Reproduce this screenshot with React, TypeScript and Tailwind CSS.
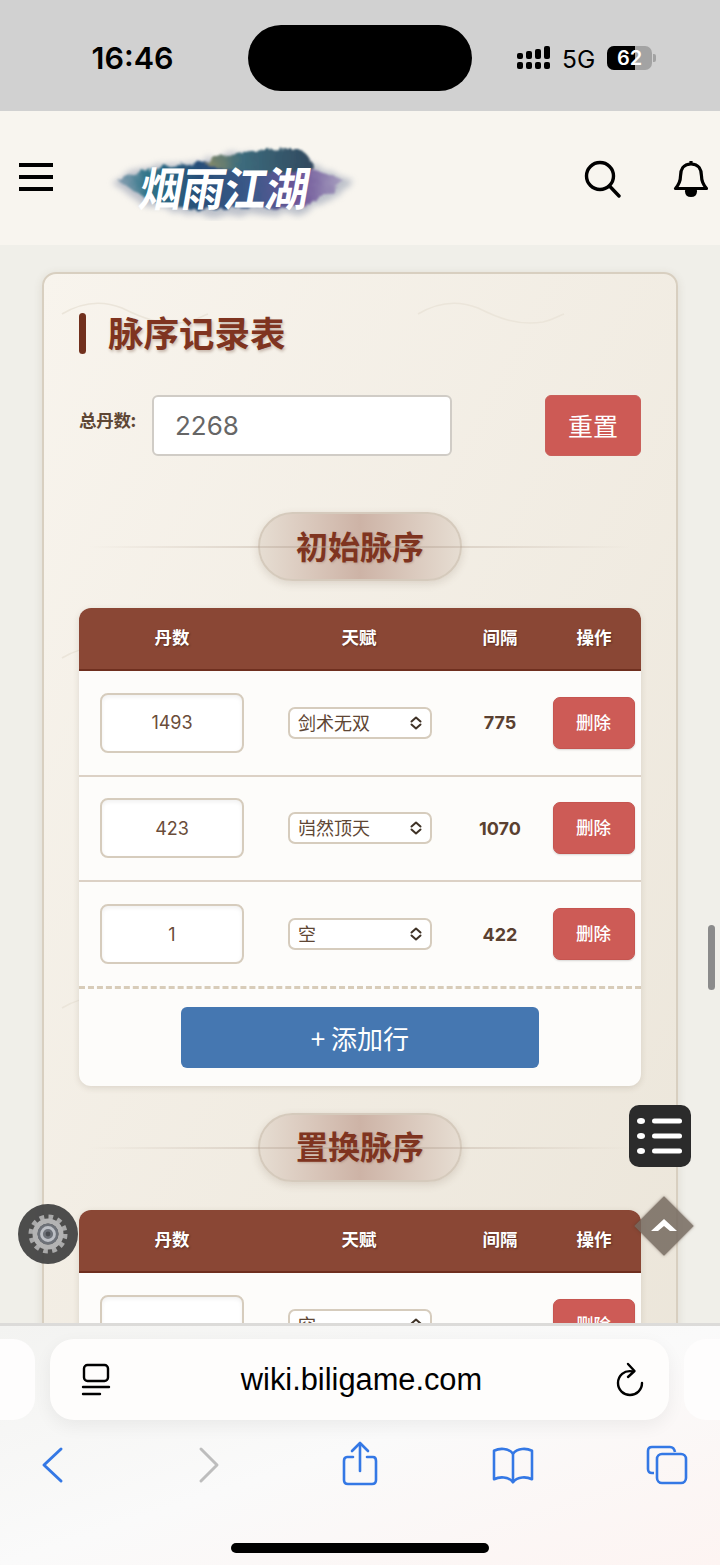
import React from "react";

const cjk = { fontFamily: '"Noto Sans CJK SC", "Noto Sans", sans-serif' };

function Signal() {
  return (
    <svg width="36" height="24" viewBox="0 0 36 24" className="block">
      <g fill="#000">
        <rect x="1" y="7" width="6" height="6" rx="2" />
        <rect x="10" y="5" width="6" height="8" rx="2" />
        <rect x="19" y="3" width="6" height="10" rx="2" />
        <rect x="28" y="0" width="6" height="13" rx="2" />
        <rect x="1" y="16" width="6" height="7" rx="2" />
        <rect x="10" y="16" width="6" height="7" rx="2" />
        <rect x="19" y="16" width="6" height="7" rx="2" />
        <rect x="28" y="16" width="6" height="7" rx="2" />
      </g>
    </svg>
  );
}

function Battery() {
  return (
    <div className="flex items-center gap-[1px]">
      <div className="relative flex h-[24px] w-[45px] items-center justify-center overflow-hidden rounded-[7px] bg-[#a3a3a3]">
        <div className="absolute inset-y-0 left-0 w-[28px] bg-black" />
        <span className="relative text-[20px] font-semibold leading-none text-white" style={{ fontFamily: "Inter, sans-serif" }}>
          62
        </span>
      </div>
      <div className="h-[8px] w-[3px] rounded-r-[2px] bg-[#a3a3a3]" />
    </div>
  );
}

function StatusBar() {
  return (
    <div className="flex h-[111px] shrink-0 bg-[#d1d1d1]">
      <div className="flex w-[248px] items-center justify-center pl-[17px] pt-[5px]">
        <span className="text-[30.5px] font-semibold leading-none text-black" style={{ fontFamily: "Inter, sans-serif" }}>
          16:46
        </span>
      </div>
      <div className="mt-[25px] h-[66px] w-[224px] rounded-[33px] bg-black" />
      <div className="flex items-center pl-[44px] pt-[5px]">
        <Signal />
        <span className="ml-[10px] mr-[12px] mt-[3px] text-[24.5px] leading-none text-black" style={{ fontFamily: "Inter, sans-serif" }}>
          5G
        </span>
        <Battery />
      </div>
    </div>
  );
}

function Logo() {
  return (
    <div className="relative h-[84px] w-[256px]">
      <svg width="256" height="84" viewBox="0 0 256 84" className="absolute inset-0">
        <defs>
          <linearGradient id="ink" x1="0" x2="1" y1="0" y2="0">
            <stop offset="0" stopColor="#8ea2b4" />
            <stop offset="0.13" stopColor="#2f7488" />
            <stop offset="0.36" stopColor="#274e78" />
            <stop offset="0.6" stopColor="#3d5a8a" />
            <stop offset="0.8" stopColor="#6d5498" />
            <stop offset="1" stopColor="#a9a2c0" />
          </linearGradient>
          <linearGradient id="top" x1="0" x2="1" y1="0" y2="0">
            <stop offset="0" stopColor="#8c8d66" />
            <stop offset="0.35" stopColor="#3c6b7c" />
            <stop offset="1" stopColor="#31495f" />
          </linearGradient>
          <filter id="haze" x="-15%" y="-30%" width="130%" height="160%">
            <feTurbulence type="fractalNoise" baseFrequency="0.06" numOctaves="3" seed="9" />
            <feDisplacementMap in="SourceGraphic" scale="12" />
            <feGaussianBlur stdDeviation="3" />
          </filter>
          <filter id="rough" x="-10%" y="-20%" width="120%" height="140%">
            <feTurbulence type="fractalNoise" baseFrequency="0.12" numOctaves="3" seed="4" />
            <feDisplacementMap in="SourceGraphic" scale="8" />
            <feGaussianBlur stdDeviation="1.2" />
          </filter>
        </defs>
        <path
          filter="url(#haze)"
          d="M6 44 C30 28 60 28 92 22 C130 14 170 14 196 24 C220 32 240 38 250 45 C236 56 224 68 204 74 C170 80 130 76 100 78 C75 78 50 74 30 62 C20 54 14 50 6 44 Z"
          fill="#8e98ad"
          opacity="0.55"
        />
        <g filter="url(#rough)">
          <path
            d="M14 44 C34 32 60 30 92 26 C120 20 160 20 186 26 C206 32 226 36 240 44 C228 52 218 62 200 68 C170 74 136 68 108 72 C84 74 62 70 44 62 C32 54 24 50 14 44 Z"
            fill="url(#ink)"
          />
          <path d="M100 26 C118 16 150 12 196 12 C204 18 212 26 206 34 C168 36 124 36 100 26 Z" fill="url(#top)" />
        </g>
      </svg>
      <div
        className="absolute left-[31px] top-[18px] flex h-[60px] w-[180px] items-center justify-center whitespace-nowrap text-[43px] font-bold leading-none tracking-[-1px] text-white [transform:skewX(-10deg)_scaleY(1.08)]"
        style={{ fontFamily: '"Noto Sans CJK JP", "Noto Sans CJK SC", sans-serif' }}
      >
        烟雨江湖
      </div>
    </div>
  );
}

function Header() {
  return (
    <div className="flex h-[134px] shrink-0 items-center bg-[#f8f5ef]">
      <div className="mb-[3px] ml-[19px] flex w-[34px] flex-col gap-[8px]">
        <div className="h-[4px] bg-black" />
        <div className="h-[4px] bg-black" />
        <div className="h-[4px] bg-black" />
      </div>
      <div className="mb-[-1px] ml-[51px]">
        <Logo />
      </div>
      <div className="flex-1" />
      <svg width="38" height="38" viewBox="0 0 38 38" fill="none" stroke="#000" strokeWidth="3.4" strokeLinecap="round" className="mr-[51px] mb-[-2px] block">
        <circle cx="16" cy="16" r="13.5" />
        <path d="M25.5 26 L35 36" />
      </svg>
      <svg width="36" height="38" viewBox="0 0 36 38" fill="none" stroke="#000" strokeWidth="3.2" strokeLinejoin="round" className="mr-[11px] mb-[-2px] block">
        <path d="M18 4 C10 4 7.5 10 7.5 16 C7.5 22 5.5 25 2.5 28.5 L33.5 28.5 C30.5 25 28.5 22 28.5 16 C28.5 10 26 4 18 4 Z" />
        <path d="M18 1 V4" />
        <path d="M13.5 31 C14 37 22 37 22.5 31 Z" fill="#000" />
      </svg>
    </div>
  );
}

function Chevrons() {
  return (
    <svg width="12" height="14" viewBox="0 0 12 14" fill="none" stroke="#3f3226" strokeWidth="2" strokeLinecap="round" strokeLinejoin="round" className="block">
      <path d="M1.5 5.5 L6 1.5 L10.5 5.5" />
      <path d="M1.5 8.5 L6 12.5 L10.5 8.5" />
    </svg>
  );
}

function Row({ value, talent, gap, last }: { value: string; talent: string; gap: string; last?: boolean }) {
  return (
    <div
      className={
        "grid grid-cols-[186px_188px_94px_94px] items-center " +
        (last ? "h-[106.67px] border-b-[3px] border-dashed border-[#d8ccb9]" : "h-[105.67px] border-b-[2px] border-[#dcd1c5]")
      }
    >
      <div className="flex justify-center">
        <input
          readOnly
          value={value}
          className="h-[60px] w-[144px] rounded-[8px] border-2 border-[#d6ccbd] bg-white text-center text-[18px] text-[#6a4c39] shadow-[inset_0_2px_4px_rgba(0,0,0,0.06)] outline-none"
          style={{ fontFamily: "Inter, sans-serif" }}
        />
      </div>
      <div className="flex justify-center pl-[2px]">
        <div className="flex h-[32px] w-[144px] items-center justify-between rounded-[7px] border-2 border-[#d6ccbd] bg-white pl-[8px] pr-[8px]">
          <span className="mt-[-2px] text-[18px] leading-none text-[#5e4634]" style={cjk}>
            {talent}
          </span>
          <Chevrons />
        </div>
      </div>
      <div className="text-center text-[18px] font-bold text-[#5a4030]" style={{ fontFamily: "Inter, sans-serif" }}>
        {gap}
      </div>
      <div className="flex justify-center pr-[1px]">
        <div className="flex h-[52px] w-[82px] items-center justify-center rounded-[7px] border border-[#c65550] bg-[#cd5b56] pb-[2px] text-[17.5px] font-medium text-white shadow-[0_1px_2px_rgba(0,0,0,0.15)]" style={cjk}>
          删除
        </div>
      </div>
    </div>
  );
}

function TableHead() {
  return (
    <div
      className="grid h-[63px] grid-cols-[186px_188px_94px_94px] items-center rounded-t-[12px] border-b-2 border-[#6f2f1f] bg-[#8a4735] pb-[3px] text-center text-[17.5px] font-bold text-white [text-shadow:1px_1px_2px_rgba(0,0,0,0.35)]"
      style={cjk}
    >
      <div>丹数</div>
      <div>天赋</div>
      <div>间隔</div>
      <div>操作</div>
    </div>
  );
}

function SectionTitle({ text }: { text: string }) {
  return (
    <div className="relative flex h-[69px] justify-center">
      <div
        className="flex h-[69px] w-[204px] items-center justify-center rounded-[35px] border-2 border-[#d5cabc] bg-gradient-to-r from-[#e6ddd2] via-[#cdb3a6] to-[#e6ddd2] pb-[4px] text-[32px] font-bold leading-none text-[#7f3420] shadow-[0_3px_8px_rgba(90,60,40,0.15)] [text-shadow:1px_1px_2px_rgba(120,70,50,0.25)]"
        style={cjk}
      >
        {text}
      </div>
      <div className="absolute inset-x-[10px] top-[34px] h-[2px] bg-gradient-to-r from-transparent via-[#b9a899]/60 to-transparent" />
    </div>
  );
}

function Waves() {
  const wave = "M0 14 C20 2 40 0 60 8 C80 18 100 26 125 22 C135 20 140 16 146 14";
  return (
    <svg className="absolute inset-0 h-full w-full" fill="none" stroke="#ebe5da" strokeWidth="1.6">
      <path d={wave} transform="translate(18 26)" />
      <path d={wave} transform="translate(374 26)" />
      <path d={wave} transform="translate(18 370)" />
      <path d={wave} transform="translate(18 720)" />
      <path d={wave} transform="translate(374 720)" />
    </svg>
  );
}

function Card() {
  return (
    <div className="relative mx-[42px] h-[1200px] rounded-[14px] border-2 border-[#d8cfc0] bg-gradient-to-br from-[#f8f4ed] to-[#ebe5d9] px-[35px] pt-[39px] shadow-[0_2px_10px_rgba(90,70,50,0.12)]">
      <Waves />
      <div className="relative">
        <div className="flex h-[41px] items-center">
          <div className="h-[41px] w-[7px] rounded-[4px] bg-[#71301d]" />
          <div className="mb-[3px] ml-[22px] text-[35.5px] font-bold leading-none text-[#7f3420] [text-shadow:1px_2px_3px_rgba(90,50,30,0.3)]" style={cjk}>
            脉序记录表
          </div>
        </div>
        <div className="mt-[41px] flex h-[61px] items-center">
          <div className="mb-[11px] w-[73px] text-[17.5px] font-bold leading-none tracking-[-0.3px] text-[#5e4634]" style={cjk}>
            总丹数:
          </div>
          <input
            readOnly
            value="2268"
            className="h-[61px] w-[300px] rounded-[6px] border-2 border-[#d0ccc6] bg-white pl-[21px] text-[26px] text-[#666] outline-none"
            style={{ fontFamily: "Inter, sans-serif" }}
          />
          <div className="flex-1" />
          <div className="flex h-[61px] w-[96px] items-center justify-center rounded-[6px] border border-[#c9605a] bg-[#cd5a55] text-[25px] text-white" style={cjk}>
            重置
          </div>
        </div>
        <div className="mt-[56px]">
          <SectionTitle text="初始脉序" />
        </div>
        <div className="mt-[27px] rounded-[12px] bg-[#fdfcfa] shadow-[0_2px_6px_rgba(90,70,50,0.15)]">
          <TableHead />
          <Row value="1493" talent="剑术无双" gap="775" />
          <Row value="423" talent="岿然顶天" gap="1070" />
          <Row value="1" talent="空" gap="422" last />
          <div className="flex h-[97px] items-start justify-center pt-[18px]">
            <div className="flex h-[61px] w-[358px] items-center justify-center rounded-[6px] bg-[#4577b1] text-[26px] text-white" style={cjk}>
              + 添加行
            </div>
          </div>
        </div>
        <div className="mt-[27px]">
          <SectionTitle text="置换脉序" />
        </div>
        <div className="mt-[28px] rounded-[12px] bg-[#fdfcfa] shadow-[0_2px_6px_rgba(90,70,50,0.15)]">
          <TableHead />
          <Row value="" talent="空" gap="" />
        </div>
      </div>
    </div>
  );
}

function Gear() {
  return (
    <svg width="42" height="42" viewBox="0 0 42 42" className="block">
      <circle cx="21" cy="21" r="17" fill="none" stroke="#a9a9a9" strokeWidth="5" strokeDasharray="4.6 4.3" />
      <circle cx="21" cy="21" r="13" fill="none" stroke="#b3b3b3" strokeWidth="5" />
      <circle cx="21" cy="21" r="10.5" fill="#6d7178" />
      <circle cx="21" cy="21" r="6.5" fill="none" stroke="#bcbfc5" strokeWidth="2.8" />
      <circle cx="21" cy="21" r="2.4" fill="#4a4d52" />
    </svg>
  );
}

function Floaters() {
  return (
    <>
      <div className="absolute left-[18px] top-[1204px] flex h-[60px] w-[60px] items-center justify-center rounded-full bg-[#434343]/95">
        <Gear />
      </div>
      <div className="absolute left-[629px] top-[1105px] flex h-[62px] w-[62px] items-center justify-center rounded-[10px] bg-[#2b2b2b]">
        <svg width="46" height="40" viewBox="0 0 46 40" className="block" fill="#fff">
          <ellipse cx="4" cy="5" rx="4" ry="3" />
          <ellipse cx="4" cy="20" rx="4" ry="3" />
          <ellipse cx="4" cy="35" rx="4" ry="3" />
          <rect x="15" y="2.5" width="30" height="5" rx="2.5" />
          <rect x="15" y="17.5" width="30" height="5" rx="2.5" />
          <rect x="15" y="32.5" width="30" height="5" rx="2.5" />
        </svg>
      </div>
      <div className="absolute left-[643px] top-[1205px] h-[42px] w-[42px] rotate-45 bg-[#74695e]/85 shadow-[0_0_3px_rgba(70,50,40,0.5)]" />
      <svg width="32" height="20" viewBox="0 0 32 20" className="absolute left-[648px] top-[1216px] block">
        <path d="M3 15 L16 3 L29 15 L22 15 L16 10 L10 15 Z" fill="#fff" />
      </svg>
      <div className="absolute left-[708px] top-[925px] h-[65px] w-[7px] rounded-full bg-[#8b8b8b]" />
    </>
  );
}

function BottomBar() {
  const blue = "#3478e5";
  return (
    <div className="h-[242px] shrink-0 border-t-[3px] border-[#dcdbd9] bg-gradient-to-br from-[#f3f3f1] via-[#fafafa] to-[#fdf4f2]">
      <div className="mt-[13px] flex h-[81px] gap-[15px]">
        <div className="h-[81px] w-[35px] shrink-0 rounded-r-[22px] bg-[#fefdfd]" />
        <div className="flex h-[81px] w-[619px] shrink-0 items-center rounded-[24px] bg-[#fefdfc] shadow-[0_6px_18px_rgba(0,0,0,0.06)]">
          <svg width="30" height="34" viewBox="0 0 30 34" fill="none" stroke="#000" strokeWidth="2.4" strokeLinecap="round" className="ml-[31px] block">
            <rect x="3" y="2" width="24" height="16" rx="3.5" />
            <path d="M2 24 H28" />
            <path d="M2 31 H19" />
          </svg>
          <div className="flex-1 pr-[3px] pt-[2px] text-center text-[30.8px] leading-none text-black" style={{ fontFamily: '"Liberation Sans", Arial, sans-serif' }}>
            wiki.biligame.com
          </div>
          <svg width="30" height="36" viewBox="0 0 30 36" fill="none" stroke="#000" strokeWidth="2.4" strokeLinecap="round" strokeLinejoin="round" className="mr-[24px] block">
            <path d="M18 9.5 C9 7.5 3 14 3 21 C3 28 8.5 33 15 33 C21.5 33 27 28 27 21" />
            <path d="M13 2 L19.5 9 L13 15" />
          </svg>
        </div>
        <div className="h-[81px] w-[36px] shrink-0 rounded-l-[22px] bg-[#fefdfd]" />
      </div>
      <div className="mt-[21px] flex h-[48px] items-center">
        <svg width="24" height="38" viewBox="0 0 24 38" fill="none" stroke={blue} strokeWidth="3" strokeLinecap="round" strokeLinejoin="round" className="ml-[40px] block">
          <path d="M21 3 L4 19 L21 35" />
        </svg>
        <svg width="24" height="38" viewBox="0 0 24 38" fill="none" stroke="#bdbdbd" strokeWidth="3" strokeLinecap="round" strokeLinejoin="round" className="ml-[133px] block">
          <path d="M4 3 L20 19 L4 35" />
        </svg>
        <svg width="38" height="48" viewBox="0 0 38 48" fill="none" stroke={blue} strokeWidth="2.6" strokeLinecap="round" strokeLinejoin="round" className="ml-[120px] block">
          <path d="M12 16 H6 Q3 16 3 20 V39 Q3 43 7 43 H31 Q35 43 35 39 V20 Q35 16 32 16 H26" />
          <path d="M19 30 V3" />
          <path d="M11 10 L19 2 L27 10" />
        </svg>
        <svg width="44" height="38" viewBox="0 0 46 40" fill="none" stroke={blue} strokeWidth="2.7" strokeLinecap="round" strokeLinejoin="round" className="ml-[112px] block">
          <path d="M23 8 C18 2 9 2 3 5 V35 C9 32 18 32 23 38 C28 32 37 32 43 35 V5 C37 2 28 2 23 8 Z" />
          <path d="M23 8 V38" />
        </svg>
        <svg width="42" height="40" viewBox="0 0 42 40" fill="none" stroke={blue} strokeWidth="2.6" strokeLinejoin="round" className="ml-[111px] block">
          <path d="M8 28 H6 Q2 28 2 24 V6 Q2 2 6 2 H24 Q28 2 29 7" />
          <rect x="11" y="9" width="29" height="29" rx="5" />
        </svg>
      </div>
      <div className="mx-auto mt-[54px] h-[10px] w-[258px] rounded-full bg-black" />
    </div>
  );
}

export default function App() {
  return (
    <div className="relative flex h-[1565px] w-[720px] flex-col overflow-hidden bg-[#f0efe9]">
      <StatusBar />
      <Header />
      <div className="min-h-0 flex-1 overflow-hidden pt-[27px]">
        <Card />
      </div>
      <BottomBar />
      <Floaters />
    </div>
  );
}
